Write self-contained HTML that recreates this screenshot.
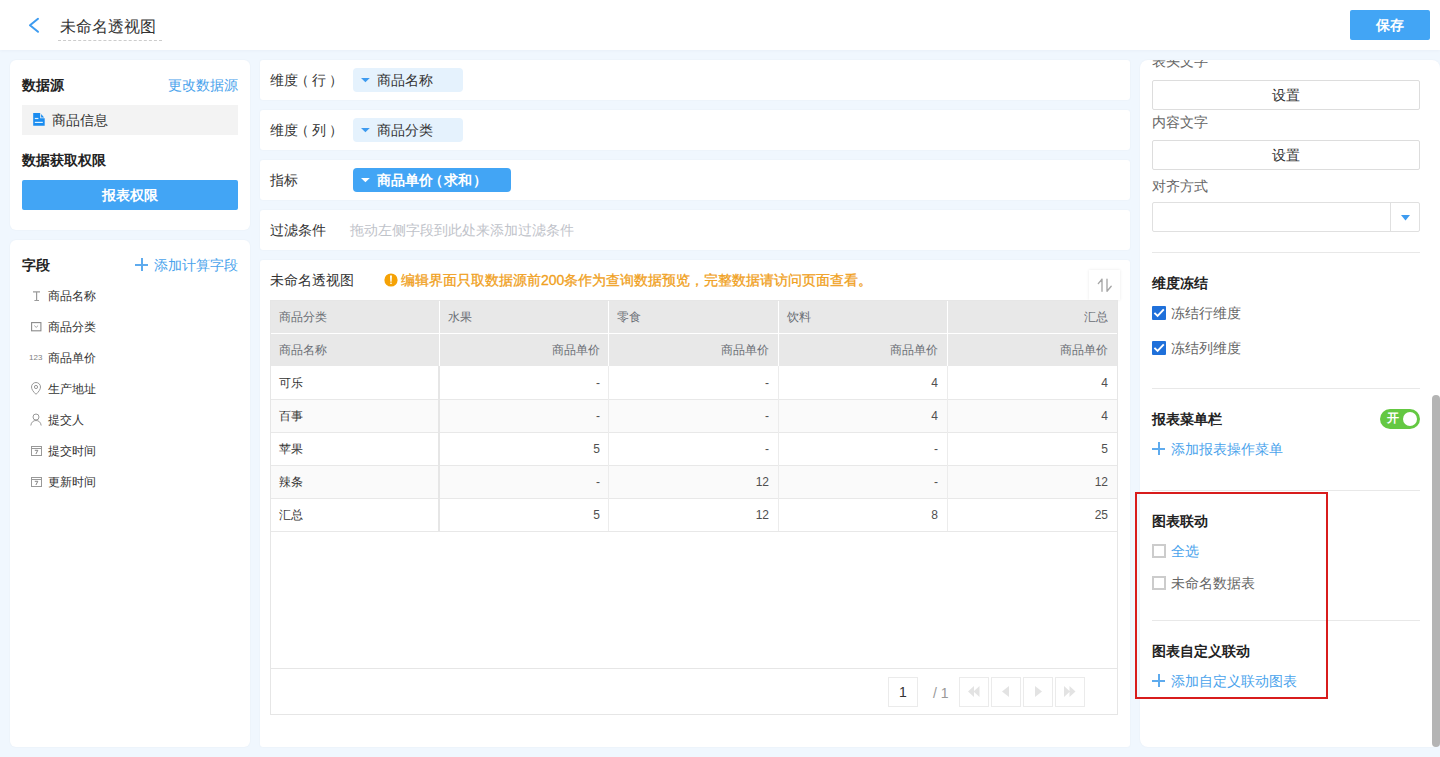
<!DOCTYPE html>
<html><head><meta charset="utf-8">
<style>
*{box-sizing:border-box;margin:0;padding:0}
html,body{width:1440px;height:757px;overflow:hidden}
body{position:relative;background:#f0f7fe;font-family:"Liberation Sans",sans-serif;color:#333;font-size:14px}
.a{position:absolute;white-space:nowrap}
.hdr{left:0;top:0;width:1440px;height:50px;background:#fff}
.card{background:#fff;box-shadow:0 0 2px rgba(0,20,60,0.05)}
.t14{font-size:14px;line-height:20px}
.t12{font-size:12px;line-height:20px}
.b{font-weight:bold;color:#222}
.blue{color:#4aa3ec}
.pb{top:677px;width:30px;height:30px;border:1px solid #ebebeb}
.pb svg{display:block}
.th{font-size:12px;line-height:20px;color:#6a6e75}
.td{font-size:12px;line-height:20px;color:#333}
.sbtn{width:268px;height:30px;border:1px solid #ddd;border-radius:2px;font-size:14px;line-height:28px;text-align:center;color:#333}
.sep{left:1152px;width:268px;height:1px;background:#e8e8e8}
.chk{left:1152px;width:14px;height:14px;background:#1f70da;border-radius:1px}
.chk svg{display:block}
.uchk{left:1152px;width:14px;height:14px;border:2px solid #ccc}
.plus{display:inline-block;position:relative;width:13px;height:13px;margin-right:6px;vertical-align:-1px}
.plus:before{content:"";position:absolute;left:0;top:5.5px;width:13px;height:2px;background:#5eabee}
.plus:after{content:"";position:absolute;left:5.5px;top:0;width:2px;height:13px;background:#5eabee}
.r{position:relative}
</style></head><body>

<!-- header -->
<div class="a hdr" style="box-shadow:0 1px 3px rgba(0,40,90,0.035)"></div>
<svg class="a" style="left:26px;top:15px" width="16" height="21" viewBox="0 0 16 21"><path d="M12 3.8 L4 10.3 L12 16.8" fill="none" stroke="#3d9bf0" stroke-width="2" stroke-linecap="round" stroke-linejoin="round"/></svg>
<div class="a" style="left:60px;top:17px;font-size:16px;line-height:20px;color:#333">未命名透视图</div>
<div class="a" style="left:58px;top:40px;width:104px;height:1px;border-top:1px dashed #ccc"></div>
<div class="a" style="left:1350px;top:10px;width:80px;height:30px;background:#42a5f5;border-radius:2px;color:#fff;font-weight:bold;font-size:14px;line-height:30px;text-align:center">保存</div>

<!-- left panel 1 -->
<div class="a card" style="left:10px;top:60px;width:240px;height:170px;border-radius:6px"></div>
<div class="a t14 b" style="left:22px;top:75px">数据源</div>
<div class="a t14 blue" style="left:168px;top:75px">更改数据源</div>
<div class="a" style="left:22px;top:105px;width:216px;height:30px;background:#f3f3f3"></div>
<svg class="a" style="left:33px;top:113px" width="12" height="13" viewBox="0 0 12 13"><path d="M0.2 0 H7.2 V5.3 H11.7 V12.8 H0.2 Z" fill="#1a8cf0"/><path d="M8.1 0.9 L11.1 4.5 H8.1 Z" fill="#1a8cf0"/><rect x="1.8" y="4.9" width="3.6" height="1.2" fill="#dff3ff"/><rect x="1.8" y="8.8" width="8" height="1.2" fill="#dff3ff"/></svg>
<div class="a t14" style="left:52px;top:110px;color:#333">商品信息</div>
<div class="a t14 b" style="left:22px;top:150px">数据获取权限</div>
<div class="a" style="left:22px;top:180px;width:216px;height:30px;background:#42a5f5;border-radius:2px;color:#fff;font-weight:bold;font-size:14px;line-height:30px;text-align:center">报表权限</div>

<!-- left panel 2 -->
<div class="a card" style="left:10px;top:240px;width:240px;height:507px;border-radius:6px"></div>
<div class="a t14 b" style="left:22px;top:255px">字段</div>
<div class="a t14 blue" style="left:135px;top:255px"><span class="plus"></span>添加计算字段</div>


<!-- field items -->
<svg class="a" style="left:31px;top:290px" width="10" height="12" viewBox="0 0 10 12"><path d="M2 1.9 H9 M5.6 2 V10.5 M3.4 10.5 H8" fill="none" stroke="#9a9a9a" stroke-width="1.2"/></svg>
<div class="a t12" style="left:48px;top:286px">商品名称</div>
<svg class="a" style="left:31px;top:321px" width="11" height="11" viewBox="0 0 11 11"><rect x="0.6" y="1.6" width="9.3" height="8.2" fill="none" stroke="#8a8a8a" stroke-width="1.1"/><path d="M3.3 4.6 L5.2 6.4 L7.1 4.6" fill="none" stroke="#999" stroke-width="0.9"/></svg>
<div class="a t12" style="left:48px;top:317px">商品分类</div>
<div class="a" style="left:29px;top:353px;font-size:8px;line-height:10px;color:#808080">123</div>
<div class="a t12" style="left:48px;top:348px">商品单价</div>
<svg class="a" style="left:30px;top:382px" width="12" height="13" viewBox="0 0 12 13"><path d="M6 12.3 C3 9.5 1.5 7.2 1.5 5 A4.5 4.5 0 0 1 10.5 5 C10.5 7.2 9 9.5 6 12.3 Z" fill="none" stroke="#999" stroke-width="1"/><circle cx="6" cy="5" r="1.6" fill="none" stroke="#999" stroke-width="1"/></svg>
<div class="a t12" style="left:48px;top:379px">生产地址</div>
<svg class="a" style="left:30px;top:413px" width="12" height="13" viewBox="0 0 12 13"><circle cx="6" cy="4" r="3" fill="none" stroke="#999" stroke-width="1"/><path d="M0.8 12.5 C1.3 9 3.4 7.5 6 7.5 C8.6 7.5 10.7 9 11.2 12.5" fill="none" stroke="#999" stroke-width="1"/></svg>
<div class="a t12" style="left:48px;top:410px">提交人</div>
<svg class="a" style="left:31px;top:445px" width="11" height="11" viewBox="0 0 11 11"><rect x="0.5" y="1.5" width="10" height="9" fill="none" stroke="#999" stroke-width="1"/><path d="M0.5 3.5 H10.5" stroke="#999" stroke-width="1"/><path d="M3.8 5.3 H6.8 L4.9 9" fill="none" stroke="#777" stroke-width="0.9"/></svg>
<div class="a t12" style="left:48px;top:441px">提交时间</div>
<svg class="a" style="left:31px;top:476px" width="11" height="11" viewBox="0 0 11 11"><rect x="0.5" y="1.5" width="10" height="9" fill="none" stroke="#999" stroke-width="1"/><path d="M0.5 3.5 H10.5" stroke="#999" stroke-width="1"/><path d="M3.8 5.3 H6.8 L4.9 9" fill="none" stroke="#777" stroke-width="0.9"/></svg>
<div class="a t12" style="left:48px;top:472px">更新时间</div>

<!-- middle rows -->
<div class="a card" style="left:260px;top:60px;width:870px;height:40px;border-radius:3px"></div>
<div class="a t14" style="left:270px;top:70px">维度<span class="r" style="left:-3px">（</span>行<span class="r" style="left:3px">）</span></div>
<div class="a" style="left:353px;top:68px;width:110px;height:24px;background:#e5f2fd;border-radius:4px"></div>
<svg class="a" style="left:361px;top:77px" width="9" height="6" viewBox="0 0 9 6"><path d="M0 1 H8.8 L4.4 5.2 Z" fill="#3d9bf0"/></svg>
<div class="a t14" style="left:377px;top:70px">商品名称</div>

<div class="a card" style="left:260px;top:110px;width:870px;height:40px;border-radius:3px"></div>
<div class="a t14" style="left:270px;top:120px">维度<span class="r" style="left:-3px">（</span>列<span class="r" style="left:3px">）</span></div>
<div class="a" style="left:353px;top:118px;width:110px;height:24px;background:#e5f2fd;border-radius:4px"></div>
<svg class="a" style="left:361px;top:127px" width="9" height="6" viewBox="0 0 9 6"><path d="M0 1 H8.8 L4.4 5.2 Z" fill="#3d9bf0"/></svg>
<div class="a t14" style="left:377px;top:120px">商品分类</div>

<div class="a card" style="left:260px;top:160px;width:870px;height:40px;border-radius:3px"></div>
<div class="a t14" style="left:270px;top:170px">指标</div>
<div class="a" style="left:353px;top:168px;width:158px;height:24px;background:#42a5f5;border-radius:4px"></div>
<svg class="a" style="left:361px;top:177px" width="9" height="6" viewBox="0 0 9 6"><path d="M0 1 H8.8 L4.4 5.2 Z" fill="#fff"/></svg>
<div class="a t14" style="left:377px;top:170px;color:#fff;font-weight:bold">商品单价<span class="r" style="left:-4px">（</span><span class="r" style="left:-3px">求和</span><span class="r" style="left:-2px">）</span></div>

<div class="a card" style="left:260px;top:210px;width:870px;height:40px;border-radius:3px"></div>
<div class="a t14" style="left:270px;top:220px">过滤条件</div>
<div class="a t14" style="left:350px;top:220px;color:#bfc3ca">拖动左侧字段到此处来添加过滤条件</div>

<!-- table card -->
<div class="a card" style="left:260px;top:260px;width:870px;height:487px;border-radius:3px"></div>
<div class="a t14" style="left:270px;top:270px">未命名透视图</div>
<svg class="a" style="left:384px;top:273px" width="14" height="14" viewBox="0 0 14 14"><circle cx="7" cy="7" r="6.6" fill="#f5a205"/><path d="M6 2.6 H8 L7.6 8.8 H6.4 Z" fill="#fff"/><rect x="6.3" y="9.6" width="1.4" height="1.4" fill="#fff"/></svg>
<div class="a t14" style="left:401px;top:270px;color:#f0a020;-webkit-text-stroke:0.3px #f0a020">编辑界面只取数据源前200条作为查询数据预览，完整数据请访问页面查看。</div>
<div class="a" style="left:1089px;top:270px;width:31px;height:30px;background:#fff;box-shadow:0 0 3px rgba(0,0,0,0.09)"></div>
<svg class="a" style="left:1089px;top:270px" width="31" height="30" viewBox="0 0 31 30"><path d="M13 9.2 V21.2 M13 9.2 L9.3 13.6 M18 9.2 V21.2 M18 21.2 L22.2 16.3" fill="none" stroke="#a6a6a6" stroke-width="1.35" stroke-linecap="round"/></svg>

<!-- table -->
<div class="a" style="left:270px;top:300px;width:848px;height:415px;border:1px solid #e6e6e6"></div>
<div class="a" style="left:271px;top:301px;width:846px;height:65px;background:#e8e8e8"></div>
<div class="a" style="left:271px;top:333px;width:846px;height:1px;background:#fff"></div>
<div class="a" style="left:439px;top:301px;width:1px;height:65px;background:#fff"></div>
<div class="a" style="left:608px;top:301px;width:1px;height:65px;background:#fff"></div>
<div class="a" style="left:778px;top:301px;width:1px;height:65px;background:#fff"></div>
<div class="a" style="left:947px;top:301px;width:1px;height:65px;background:#fff"></div>
<div class="a th" style="left:279px;top:307px">商品分类</div>
<div class="a th" style="left:448px;top:307px">水果</div>
<div class="a th" style="left:617px;top:307px">零食</div>
<div class="a th" style="left:787px;top:307px">饮料</div>
<div class="a th" style="left:948px;top:307px;width:160px;text-align:right">汇总</div>
<div class="a th" style="left:279px;top:340px">商品名称</div>
<div class="a th" style="left:439px;top:340px;width:161px;text-align:right">商品单价</div>
<div class="a th" style="left:609px;top:340px;width:160px;text-align:right">商品单价</div>
<div class="a th" style="left:778px;top:340px;width:160px;text-align:right">商品单价</div>
<div class="a th" style="left:948px;top:340px;width:160px;text-align:right">商品单价</div>
<div class="a" style="left:271px;top:366px;width:846px;height:1px;background:#fff"></div>
<div class="a" style="left:271px;top:367px;width:846px;height:33px;background:#fff;border-bottom:1px solid #e8e8e8"></div>
<div class="a td" style="left:279px;top:373px">可乐</div>
<div class="a td" style="left:439px;top:373px;width:161px;text-align:right;color:#505050">-</div>
<div class="a td" style="left:609px;top:373px;width:160px;text-align:right;color:#505050">-</div>
<div class="a td" style="left:778px;top:373px;width:160px;text-align:right;color:#505050">4</div>
<div class="a td" style="left:948px;top:373px;width:160px;text-align:right;color:#505050">4</div>
<div class="a" style="left:271px;top:400px;width:846px;height:33px;background:#fafafa;border-bottom:1px solid #e8e8e8"></div>
<div class="a td" style="left:279px;top:406px">百事</div>
<div class="a td" style="left:439px;top:406px;width:161px;text-align:right;color:#505050">-</div>
<div class="a td" style="left:609px;top:406px;width:160px;text-align:right;color:#505050">-</div>
<div class="a td" style="left:778px;top:406px;width:160px;text-align:right;color:#505050">4</div>
<div class="a td" style="left:948px;top:406px;width:160px;text-align:right;color:#505050">4</div>
<div class="a" style="left:271px;top:433px;width:846px;height:33px;background:#fff;border-bottom:1px solid #e8e8e8"></div>
<div class="a td" style="left:279px;top:439px">苹果</div>
<div class="a td" style="left:439px;top:439px;width:161px;text-align:right;color:#505050">5</div>
<div class="a td" style="left:609px;top:439px;width:160px;text-align:right;color:#505050">-</div>
<div class="a td" style="left:778px;top:439px;width:160px;text-align:right;color:#505050">-</div>
<div class="a td" style="left:948px;top:439px;width:160px;text-align:right;color:#505050">5</div>
<div class="a" style="left:271px;top:466px;width:846px;height:33px;background:#fafafa;border-bottom:1px solid #e8e8e8"></div>
<div class="a td" style="left:279px;top:472px">辣条</div>
<div class="a td" style="left:439px;top:472px;width:161px;text-align:right;color:#505050">-</div>
<div class="a td" style="left:609px;top:472px;width:160px;text-align:right;color:#505050">12</div>
<div class="a td" style="left:778px;top:472px;width:160px;text-align:right;color:#505050">-</div>
<div class="a td" style="left:948px;top:472px;width:160px;text-align:right;color:#505050">12</div>
<div class="a" style="left:271px;top:499px;width:846px;height:33px;background:#fff;border-bottom:1px solid #e8e8e8"></div>
<div class="a td" style="left:279px;top:505px">汇总</div>
<div class="a td" style="left:439px;top:505px;width:161px;text-align:right;color:#505050">5</div>
<div class="a td" style="left:609px;top:505px;width:160px;text-align:right;color:#505050">12</div>
<div class="a td" style="left:778px;top:505px;width:160px;text-align:right;color:#505050">8</div>
<div class="a td" style="left:948px;top:505px;width:160px;text-align:right;color:#505050">25</div>
<div class="a" style="left:608px;top:366px;width:1px;height:165px;background:#ececec"></div>
<div class="a" style="left:778px;top:366px;width:1px;height:165px;background:#ececec"></div>
<div class="a" style="left:947px;top:366px;width:1px;height:165px;background:#ececec"></div>
<div class="a" style="left:438px;top:366px;width:2px;height:165px;background:#e6e6e6"></div>

<!-- pagination -->
<div class="a" style="left:271px;top:668px;width:846px;height:1px;background:#e6e6e6"></div>
<div class="a" style="left:888px;top:677px;width:30px;height:30px;border:1px solid #ebebeb;font-size:14px;line-height:28px;text-align:center;color:#333">1</div>
<div class="a" style="left:933px;top:683px;font-size:14px;line-height:20px;color:#999">/ 1</div>
<div class="a pb" style="left:959px"><svg width="28" height="28" viewBox="0 0 28 28"><path d="M8 13.5 L14 8 V19 Z M13.5 13.5 L19.5 8 V19 Z" fill="#e3e3e3"/></svg></div>
<div class="a pb" style="left:991px"><svg width="28" height="28" viewBox="0 0 28 28"><path d="M10 13.5 L17 8 V19 Z" fill="#e3e3e3"/></svg></div>
<div class="a pb" style="left:1023px"><svg width="28" height="28" viewBox="0 0 28 28"><path d="M18 13.5 L11 8 V19 Z" fill="#e3e3e3"/></svg></div>
<div class="a pb" style="left:1055px"><svg width="28" height="28" viewBox="0 0 28 28"><path d="M19.5 13.5 L13.5 8 V19 Z M14 13.5 L8 8 V19 Z" fill="#e3e3e3"/></svg></div>

<!-- right panel -->
<div class="a card" style="left:1140px;top:60px;width:300px;height:687px;border-radius:8px;overflow:hidden">
</div>
<div class="a" style="left:1140px;top:60px;width:300px;height:687px;overflow:hidden">
  <div class="a t14" style="left:12px;top:-9px;color:#666">表头文字</div>
</div>
<div class="a sbtn" style="left:1152px;top:80px">设置</div>
<div class="a t14" style="left:1152px;top:112px;color:#666">内容文字</div>
<div class="a sbtn" style="left:1152px;top:140px">设置</div>
<div class="a t14" style="left:1152px;top:176px;color:#666">对齐方式</div>
<div class="a" style="left:1152px;top:202px;width:268px;height:30px;border:1px solid #e0e0e0;border-radius:2px"></div>
<div class="a" style="left:1390px;top:203px;width:1px;height:28px;background:#e0e0e0"></div>
<svg class="a" style="left:1401px;top:215px" width="9" height="6" viewBox="0 0 9 6"><path d="M0 0 H9 L4.5 5.5 Z" fill="#3d9bf0"/></svg>
<div class="a sep" style="top:252px"></div>

<div class="a t14 b" style="left:1152px;top:273px">维度冻结</div>
<div class="a chk" style="top:306px"><svg width="14" height="14" viewBox="0 0 14 14"><path d="M2.4 6.8 L5.6 10 L11.8 3.4" fill="none" stroke="#fff" stroke-width="1.9"/></svg></div>
<div class="a t14" style="left:1171px;top:303px;color:#666">冻结行维度</div>
<div class="a chk" style="top:341px"><svg width="14" height="14" viewBox="0 0 14 14"><path d="M2.4 6.8 L5.6 10 L11.8 3.4" fill="none" stroke="#fff" stroke-width="1.9"/></svg></div>
<div class="a t14" style="left:1171px;top:338px;color:#666">冻结列维度</div>
<div class="a sep" style="top:388px"></div>

<div class="a t14 b" style="left:1152px;top:409px">报表菜单栏</div>
<div class="a" style="left:1380px;top:409px;width:40px;height:20px;border-radius:10px;background:#64c842"></div>
<div class="a" style="left:1387px;top:408px;font-size:12px;line-height:20px;color:#fff;font-weight:bold">开</div>
<div class="a" style="left:1403px;top:412px;width:14px;height:14px;border-radius:7px;background:#fff"></div>
<div class="a t14 blue" style="left:1152px;top:439px"><span class="plus"></span>添加报表操作菜单</div>
<div class="a sep" style="top:490px"></div>

<div class="a t14 b" style="left:1152px;top:511px">图表联动</div>
<div class="a uchk" style="top:544px"></div>
<div class="a t14 blue" style="left:1171px;top:541px">全选</div>
<div class="a uchk" style="top:576px"></div>
<div class="a t14" style="left:1171px;top:573px;color:#666">未命名数据表</div>
<div class="a sep" style="top:620px"></div>

<div class="a t14 b" style="left:1152px;top:641px">图表自定义联动</div>
<div class="a t14 blue" style="left:1152px;top:671px"><span class="plus"></span>添加自定义联动图表</div>

<div class="a" style="left:1432px;top:395px;width:8px;height:352px;background:#b4b4b4;border-radius:4px"></div>
<div class="a" style="left:1135px;top:492px;width:193px;height:207px;border:2px solid #d81c1c"></div>
</body></html>
